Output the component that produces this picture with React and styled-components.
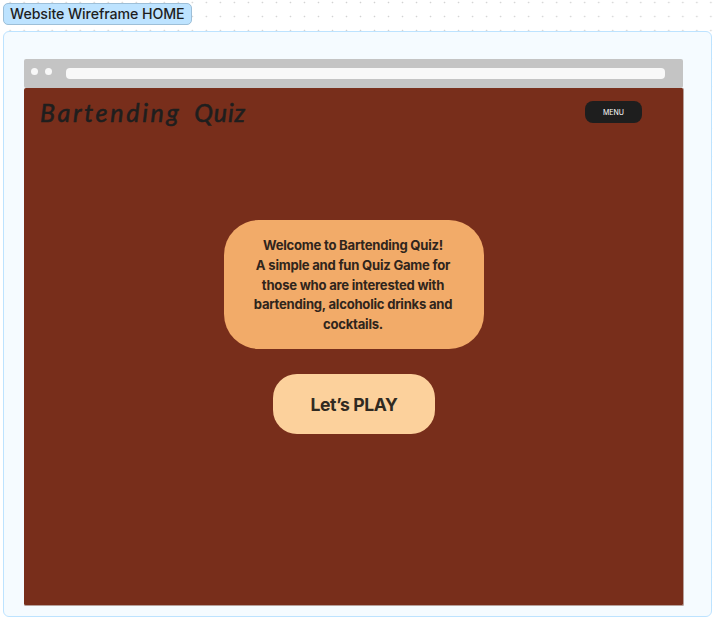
import React from "react";
import styled, { createGlobalStyle } from "styled-components";

const GlobalStyle = createGlobalStyle`
  *, *::before, *::after { box-sizing: border-box; }
  body { margin: 0; overflow: hidden; }
`;

const Canvas = styled.div`
  width: 717px;
  height: 617px;
  padding: 3px 0 0 3px;
  overflow: hidden;
  background-color: #fff;
  background-image: radial-gradient(circle at 50% 50%, #d0d0d0 0.5px, transparent 1.1px);
  background-size: 14.03px 14.03px;
  background-position: 3.1px -4.5px;
  font-family: Inter, sans-serif;
  color: #1e1e1e;
`;

const SectionLabel = styled.div`
  display: flex;
  align-items: center;
  width: 189px;
  height: 22px;
  padding-left: 6px;
  border: 1px solid #9dbfd8;
  border-radius: 5px;
  background: #bde3ff;
  font-size: 14.2px;
  font-weight: 500;
  line-height: 20px;
  letter-spacing: -0.09px;
  white-space: nowrap;
`;

const Section = styled.section`
  width: 709px;
  height: 586px;
  margin-top: 6px;
  padding: 27px 0 0 20px;
  border: 1px solid #bde3ff;
  border-radius: 6px;
  background: #f5fbff;
`;

const BrowserBar = styled.div`
  display: flex;
  align-items: flex-start;
  width: 659.4px;
  height: 29px;
  padding: 9px 0 0 7px;
  border-radius: 2px;
  background: #c4c4c4;
`;

const WindowDot = styled.span`
  width: 7px;
  height: 7px;
  margin-right: 7px;
  border-radius: 50%;
  background: #f8f8f8;
`;

const AddressField = styled.div`
  width: 599px;
  height: 11px;
  margin-left: 7px;
  border-radius: 4px;
  background: #f8f8f8;
`;

const Page = styled.main`
  display: flex;
  flex-direction: column;
  align-items: center;
  width: 660px;
  height: 518px;
  border: solid #b7a19b;
  border-width: 0 1px 1px 0;
  border-radius: 2px;
  background: #782e1b;
`;

const TopBar = styled.header`
  display: flex;
  align-items: flex-start;
  justify-content: space-between;
  width: 100%;
  height: 132px;
  padding: 13px 41px 0 16px;
`;

const Brand = styled.h1`
  display: flex;
  gap: 13px;
  margin: -5px 0 0;
  font-family: Lato, sans-serif;
  font-size: 25px;
  font-style: italic;
  font-weight: 400;
  line-height: 32px;
  white-space: nowrap;
  -webkit-text-stroke: 0.6px #1e1e1e;
`;

const BrandWord = styled.span`
  letter-spacing: ${({ $tracking }) => $tracking}px;
`;

const MenuButton = styled.button`
  width: 57px;
  height: 22px;
  padding: 1px 0 0;
  border: 0;
  border-radius: 8px;
  background: #1e1e1e;
  color: #fff;
  font: 400 7px/21px Inter, sans-serif;
`;

const Welcome = styled.div`
  width: 260.5px;
  height: 128.5px;
  margin-left: 1px;
  padding: 16px 2px 0 0;
  border-radius: 35px;
  background: #f2ab69;
  color: #30251c;
  font-size: 13.1px;
  font-weight: 700;
  line-height: 19.75px;
  letter-spacing: -0.23px;
  text-align: center;
`;

const Line = styled.span`
  display: block;
  white-space: nowrap;
`;

const PlayButton = styled.button`
  width: 162.5px;
  height: 60px;
  margin: 25.5px 0 0 1px;
  padding: 1px 0 0;
  border: 0;
  border-radius: 24px;
  background: #fcd19c;
  color: #302a21;
  font: 700 17.6px/59px Inter, sans-serif;
  letter-spacing: -0.42px;
`;

const welcomeLines = [
  "Welcome to Bartending Quiz!",
  "A simple and fun Quiz Game for",
  "those who are interested with",
  "bartending, alcoholic drinks and",
  "cocktails.",
];

export default function App() {
  return (
    <Canvas>
      <GlobalStyle />
      <SectionLabel>Website Wireframe HOME</SectionLabel>
      <Section>
        <BrowserBar>
          <WindowDot />
          <WindowDot />
          <AddressField />
        </BrowserBar>
        <Page>
          <TopBar>
            <Brand>
              <BrandWord $tracking={2.7}>Bartending</BrandWord>
              <BrandWord $tracking={0.9}>Quiz</BrandWord>
            </Brand>
            <MenuButton>MENU</MenuButton>
          </TopBar>
          <Welcome>
            {welcomeLines.map((line) => (
              <Line key={line}>{line}</Line>
            ))}
          </Welcome>
          <PlayButton>Let’s PLAY</PlayButton>
        </Page>
      </Section>
    </Canvas>
  );
}
